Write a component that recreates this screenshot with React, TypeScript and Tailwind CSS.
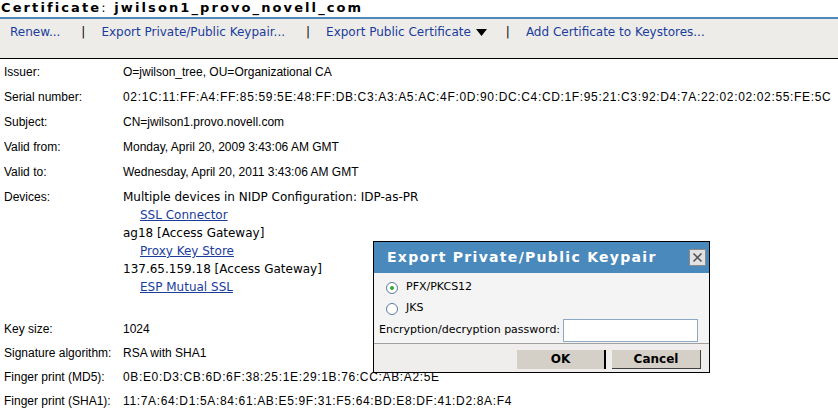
import React from 'react';

const rows: { label: string; value: string; hex?: boolean }[] = [
  { label: 'Issuer:', value: 'O=jwilson_tree, OU=Organizational CA' },
  {
    label: 'Serial number:',
    value: '02:1C:11:FF:A4:FF:85:59:5E:48:FF:DB:C3:A3:A5:AC:4F:0D:90:DC:C4:CD:1F:95:21:C3:92:D4:7A:22:02:02:02:55:FE:5C',
    hex: true,
  },
  { label: 'Subject:', value: 'CN=jwilson1.provo.novell.com' },
  { label: 'Valid from:', value: 'Monday, April 20, 2009 3:43:06 AM GMT' },
  { label: 'Valid to:', value: 'Wednesday, April 20, 2011 3:43:06 AM GMT' },
];

const tail: { label: string; value: string; hex?: boolean }[] = [
  { label: 'Key size:', value: '1024' },
  { label: 'Signature algorithm:', value: 'RSA with SHA1' },
  { label: 'Finger print (MD5):', value: '0B:E0:D3:CB:6D:6F:38:25:1E:29:1B:76:CC:AB:A2:5E', hex: true },
  { label: 'Finger print (SHA1):', value: '11:7A:64:D1:5A:84:61:AB:E5:9F:31:F5:64:BD:E8:DF:41:D2:8A:F4', hex: true },
];

function Row({ label, value, hex, tight }: { label: string; value: string; hex?: boolean; tight?: boolean }) {
  return (
    <div className={`flex py-[3px] ${tight ? 'leading-[18px]' : 'leading-[19px]'}`}>
      <div className="w-[123px] shrink-0 pl-[4px] text-[12px]">{label}</div>
      <div className={`text-[12px] whitespace-nowrap ${hex ? 'tracking-[0.65px]' : ''}`}>{value}</div>
    </div>
  );
}

function Sep() {
  return <span className="text-black ml-[21px] mr-[16px]">|</span>;
}

function Radio({ checked }: { checked?: boolean }) {
  return (
    <span className="w-[12px] h-[12px] rounded-full border border-[#5a7a9c] bg-white flex items-center justify-center">
      {checked && <span className="w-[4px] h-[4px] rounded-full bg-[#2fa83a]" />}
    </span>
  );
}

function DevLink({ children }: { children: React.ReactNode }) {
  return (
    <div className="pl-[17px]">
      <a className="text-[#1a3d9c] underline">{children}</a>
    </div>
  );
}

export default function App() {
  return (
    <div className="relative w-[838px] h-[408px] overflow-hidden bg-white text-black font-['Liberation_Sans',Arial,sans-serif]">
      <h1 className="h-[17px] pl-[1px] leading-[16px] text-[13px] font-bold tracking-[2.1px] font-['DejaVu_Sans',sans-serif]">
        Certificate<span className="font-normal">:</span> jwilson1_provo_novell_com
      </h1>
      <div className="h-[42px] border-t-2 border-[#4f87b8] border-b border-b-black bg-[#eeece9] pl-[10px] pt-[4px] text-[12px] text-[#1a3d9c] font-['DejaVu_Sans',sans-serif] flex items-start whitespace-nowrap leading-[18px]">
        <span>Renew...</span>
        <Sep />
        <span>Export Private/Public Keypair...</span>
        <Sep />
        <span className="flex items-center">
          Export Public Certificate
          <svg width="11" height="7" viewBox="0 0 11 7" className="ml-[5px]">
            <path d="M0 0h11L5.5 7z" fill="#000" />
          </svg>
        </span>
        <span className="text-black ml-[19px] mr-[16px]">|</span>
        <span>Add Certificate to Keystores...</span>
      </div>

      <div className="pt-[1px]">
        {rows.map((r) => (
          <Row key={r.label} {...r} />
        ))}
        <div className="flex py-[3px] leading-[18px]">
          <div className="w-[123px] shrink-0 pl-[4px] text-[12px]">Devices:</div>
          <div className="text-[12px] whitespace-nowrap font-['DejaVu_Sans',sans-serif]">
            <div>Multiple devices in NIDP Configuration: IDP-as-PR</div>
            <DevLink>SSL Connector</DevLink>
            <div>ag18 [Access Gateway]</div>
            <DevLink>Proxy Key Store</DevLink>
            <div>137.65.159.18 [Access Gateway]</div>
            <DevLink>ESP Mutual SSL</DevLink>
            <div className="h-[18px]" />
          </div>
        </div>
        {tail.map((r) => (
          <Row key={r.label} {...r} tight />
        ))}
      </div>

      <div className="absolute left-[373px] top-[241px] w-[337px] h-[132px] border border-black bg-[#f4f4f4] flex flex-col">
        <div className="h-[31px] bg-[#4a89bb] flex items-center justify-between pl-[13px] pr-[3px]">
          <span className="text-white text-[14px] font-bold tracking-[1.3px] font-['DejaVu_Sans',sans-serif]">
            Export Private/Public Keypair
          </span>
          <span className="w-[17px] h-[17px] bg-[#e2e2e2] border border-[#8a8a8a] flex items-center justify-center">
            <svg width="11" height="11" viewBox="0 0 11 11">
              <path d="M1.5 1.5l8 8M9.5 1.5l-8 8" stroke="#555" strokeWidth="1.6" />
            </svg>
          </span>
        </div>
        <div className="text-[11px] font-['DejaVu_Sans',sans-serif] px-[5px] pt-[4px]">
          <div className="flex items-center gap-[8px] pl-[7px] h-[21px]">
            <Radio checked />
            <span>PFX/PKCS12</span>
          </div>
          <div className="flex items-center gap-[8px] pl-[7px] h-[21px]">
            <Radio />
            <span>JKS</span>
          </div>
          <div className="flex items-center h-[24px] pb-[1px]">
            <span>Encryption/decryption password:</span>
            <span className="ml-[3px] w-[135px] h-[23px] bg-white border border-[#8ba8c6]" />
          </div>
        </div>
        <div className="flex-1 border-t border-[#a0a0a0] bg-[#efeeec] flex justify-end items-start gap-[6px] pr-[8px] pt-[6px]">
          <button className="w-[89px] h-[19px] bg-[#d4d0c8] border-r-2 border-black text-[12px] font-bold font-['DejaVu_Sans',sans-serif] leading-[19px]">
            OK
          </button>
          <button className="w-[89px] h-[19px] bg-[#d4d0c8] border-r border-b border-[#404040] text-[12px] font-bold font-['DejaVu_Sans',sans-serif] leading-[19px]">
            Cancel
          </button>
        </div>
      </div>
    </div>
  );
}
